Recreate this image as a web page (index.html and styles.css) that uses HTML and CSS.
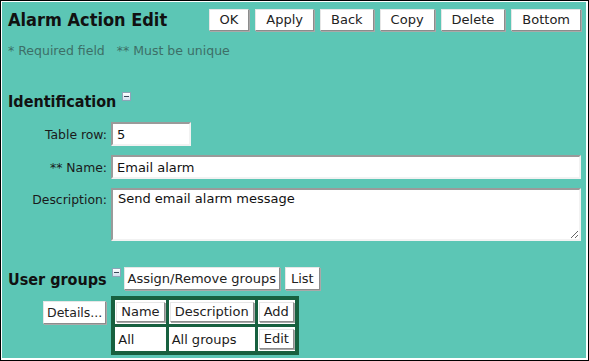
FILE: index.html
```html
<!DOCTYPE html>
<html>
<head>
<meta charset="utf-8">
<link rel="stylesheet" href="styles.css">
</head>
<body>
<div class="frame">
  <div class="header">
    <h1 class="title">Alarm Action Edit</h1>
    <div class="actions">
      <button class="btn">OK</button>
      <button class="btn">Apply</button>
      <button class="btn">Back</button>
      <button class="btn">Copy</button>
      <button class="btn">Delete</button>
      <button class="btn">Bottom</button>
    </div>
  </div>
  <div class="legend">* Required field &nbsp;&nbsp;** Must be unique</div>

  <div class="section-head">
    <h2 class="section-title">Identification</h2>
    <span class="toggle"></span>
  </div>
  <div class="form">
    <label class="lbl">Table row:</label>
    <div class="field"><input class="inp inp-short" value="5"></div>
    <label class="lbl">** Name:</label>
    <div class="field"><input class="inp inp-long" value="Email alarm"></div>
    <label class="lbl lbl-top">Description:</label>
    <div class="field"><textarea class="inp area">Send email alarm message</textarea></div>
  </div>

  <div class="groups-head">
    <h2 class="section-title">User groups</h2>
    <span class="toggle"></span>
    <button class="btn btn-sm">Assign/Remove groups</button>
    <button class="btn btn-sm btn-list">List</button>
  </div>
  <div class="groups-body">
    <button class="btn btn-sm details">Details...</button>
    <table class="grid">
      <tr>
        <td class="hcell"><button class="btn btn-cell">Name</button></td>
        <td class="hcell"><button class="btn btn-cell">Description</button></td>
        <td class="hcell"><button class="btn btn-cell">Add</button></td>
      </tr>
      <tr>
        <td class="dcell">All</td>
        <td class="dcell">All groups</td>
        <td class="hcell"><button class="btn btn-cell">Edit</button></td>
      </tr>
    </table>
  </div>
</div>
</body>
</html>
```

FILE: styles.css
```css
html, body {
  margin: 0;
  padding: 0;
  background: #ffffff;
}
.frame {
  box-sizing: border-box;
  width: 589px;
  height: 361px;
  border: 1px solid #000;
  background: #5cc6b5;
  box-shadow: inset 1px 1px 0 #ffffff, inset -2px -2px 0 #ffffff;
  font-family: "DejaVu Sans", sans-serif;
  color: #1a1a1a;
  padding: 0 7px 0 7px;
}
.header {
  display: flex;
  justify-content: space-between;
  align-items: center;
  padding-top: 7px;
  height: 23px;
}
.title {
  margin: 0;
  font-family: "DejaVu Sans Condensed", "DejaVu Sans", sans-serif;
  font-size: 18px;
  font-weight: bold;
  color: #111;
}
.actions {
  display: flex;
  gap: 6px;
}
.btn {
  font-family: "DejaVu Sans", sans-serif;
  font-size: 13px;
  color: #222;
  background: #fff;
  border: 1px solid;
  border-color: #e6e6e6 #8c8c8c #8c8c8c #e6e6e6;
  box-shadow: 1px 1px 0 #a9a9a9;
  height: 22px;
  padding: 0 10px;
  margin: 0;
  line-height: 20px;
}
.legend {
  margin-top: 12px;
  font-size: 12.5px;
  color: #3d6f67;
}
.section-head {
  display: flex;
  align-items: flex-start;
  margin-top: 34px;
}
.section-title {
  margin: 0;
  font-family: "DejaVu Sans Condensed", "DejaVu Sans", sans-serif;
  font-size: 16px;
  font-weight: bold;
  color: #111;
}
.toggle {
  display: inline-block;
  box-sizing: border-box;
  width: 9px;
  height: 9px;
  margin-left: 6px;
  margin-top: 0px;
  border: 1px solid #8ea4b8;
  background: linear-gradient(#ffffff, #cfe0ee);
  position: relative;
}
.toggle::after {
  content: "";
  position: absolute;
  left: 1px;
  right: 1px;
  top: 3px;
  height: 1px;
  background: #3a4a5a;
}
.form {
  display: grid;
  grid-template-columns: 99px 470px;
  column-gap: 4px;
  row-gap: 9px;
  margin-top: 11px;
}
.lbl {
  font-size: 12.4px;
  color: #1a1a1a;
  text-align: right;
  align-self: center;
}
.lbl-top {
  align-self: start;
  padding-top: 4px;
}
.inp {
  box-sizing: border-box;
  font-family: "DejaVu Sans", sans-serif;
  font-size: 13px;
  color: #111;
  background: #fff;
  border: 2px solid;
  border-color: #9a9a9a #f2f2f2 #f2f2f2 #9a9a9a;
  padding: 0 4px;
  height: 24px;
  margin: 0;
  display: block;
}
.inp-short { width: 80px; }
.inp-long { width: 470px; }
.area {
  width: 470px;
  height: 53px;
  padding: 1px 5px;
  resize: vertical;
}
.groups-head {
  display: flex;
  align-items: flex-start;
  margin-top: 26px;
}
.groups-head .section-title {
  margin-top: 3px;
}
.groups-head .toggle {
  margin-left: 5px;
  margin-top: 1px;
}
.groups-head .btn-sm {
  margin-left: 3px;
}
.btn-sm {
  height: 23px;
  padding: 0 3px;
}
.groups-head .btn-list {
  margin-left: 5px;
  padding: 0 5px;
}
.groups-body {
  display: flex;
  align-items: flex-start;
  margin-top: 6px;
  padding-left: 35px;
}
.details {
  margin-top: 5px;
  margin-right: 5px;
  font-size: 12.5px;
  padding: 0 3px;
}
.grid {
  border-collapse: separate;
  border-spacing: 3px;
  background: #17603f;
  border: 1px solid #17603f;
}
.grid td {
  padding: 0;
  background: #fff;
  font-size: 13px;
  height: 22px;
}
.hcell {
  padding: 1px !important;
}
.btn-cell {
  height: 20px;
  line-height: 18px;
  padding: 0 4px;
  width: 100%;
}
.dcell {
  padding: 0 3px !important;
  vertical-align: middle;
}
```
